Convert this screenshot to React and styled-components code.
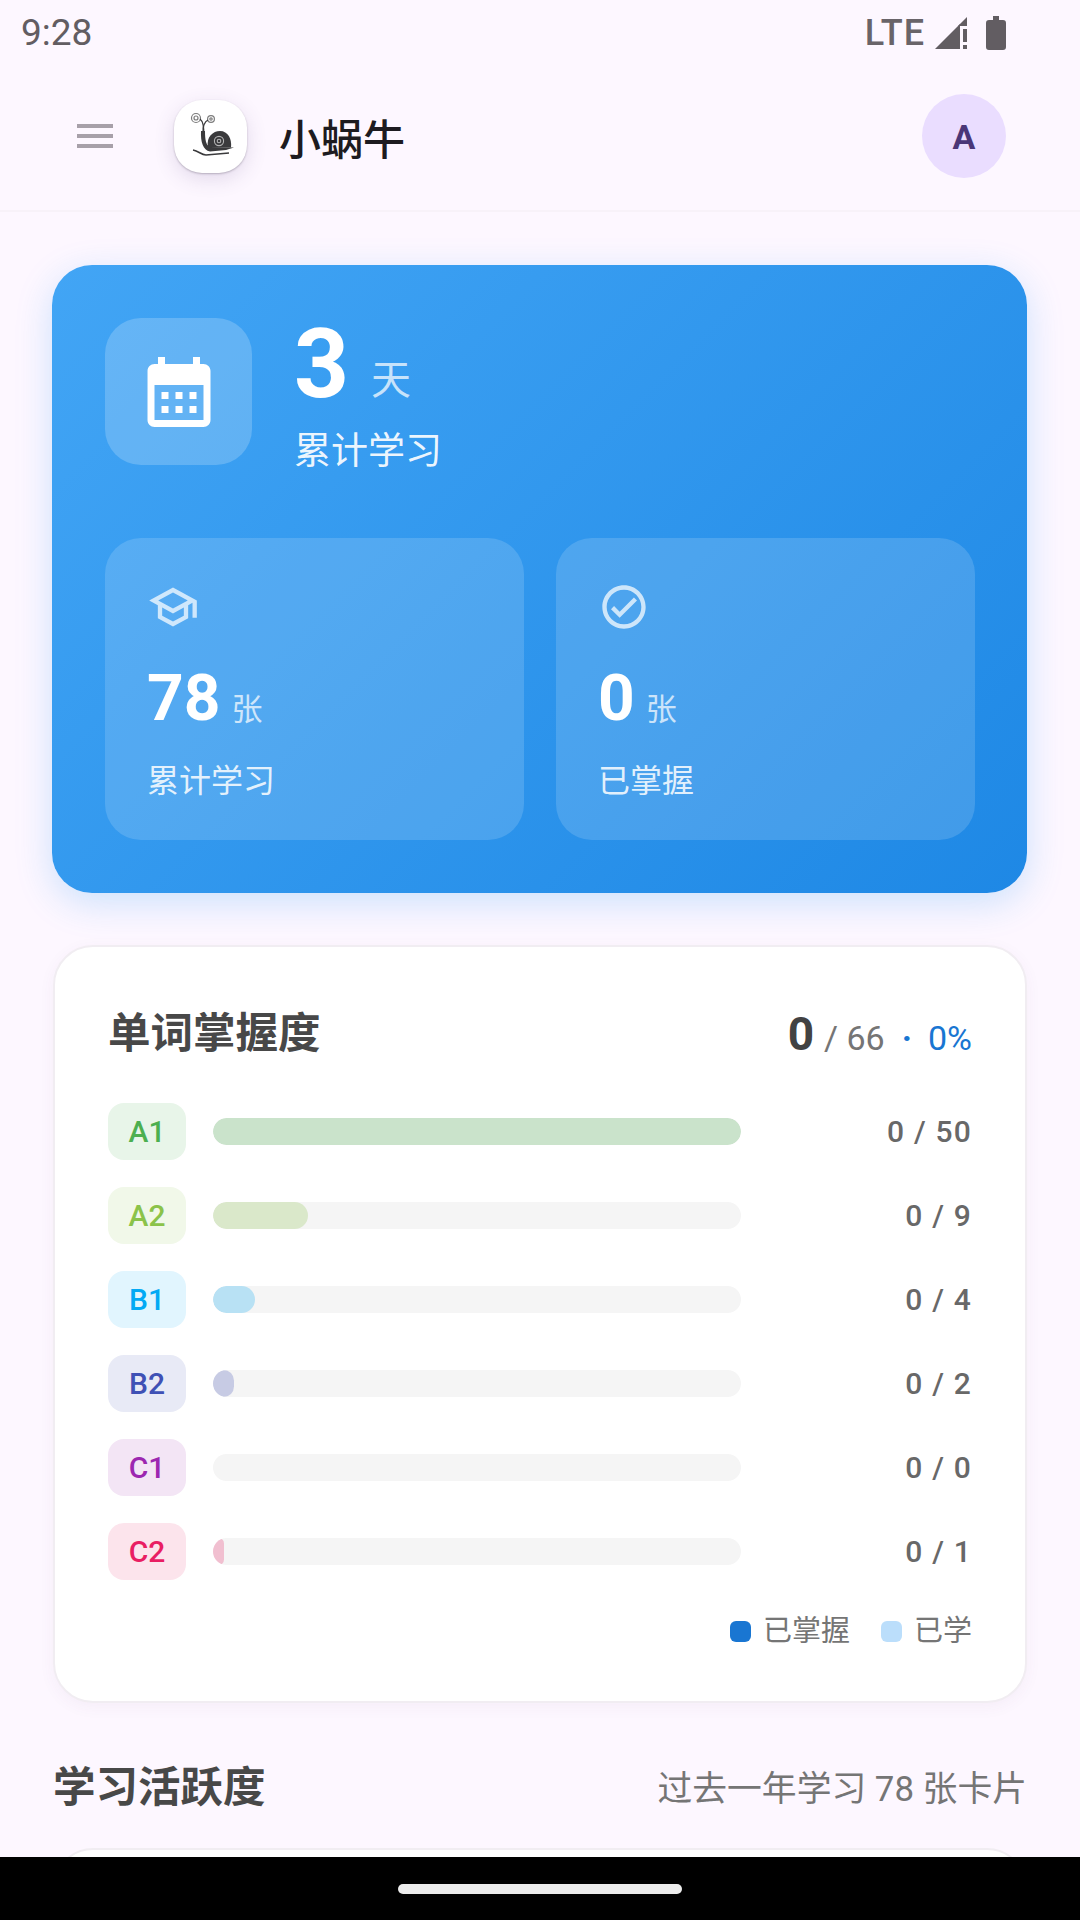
import React from "react";
import styled, { createGlobalStyle } from "styled-components";

const Global = createGlobalStyle`
  html, body { margin: 0; padding: 0; background: #fdf7ff; }
  * { box-sizing: border-box; }
  body { font-family: Roboto, "Noto Sans CJK SC", sans-serif; }
`;

const Screen = styled.div`
  width: 1080px;
  height: 1920px;
  display: flex;
  flex-direction: column;
  overflow: hidden;
  background: #fdf7ff;
`;
const StatusBar = styled.div`
  height: 68px;
  flex-shrink: 0;
  padding: 0 74px 2px 21px;
  display: flex;
  align-items: center;
  justify-content: space-between;
  color: #625d62;
`;
const Time = styled.span`
  font-size: 37px;
  line-height: 40px;
`;
const StatusIcons = styled.div`
  display: flex;
  align-items: center;
`;
const Lte = styled.span`
  font-size: 36px;
  line-height: 40px;
  font-weight: 500;
  letter-spacing: 1px;
  margin-right: 10px;
  color: #696469;
`;
const Header = styled.header`
  height: 144px;
  flex-shrink: 0;
  padding: 0 74px 6px 71px;
  display: flex;
  align-items: center;
  border-bottom: 2px solid #f8f2f9;
`;
const LogoTile = styled.div`
  width: 73px;
  height: 73px;
  margin-left: 55px;
  border-radius: 28px;
  background: #fff;
  box-shadow: 0 1px 2px rgba(60, 50, 70, 0.3), 0 6px 20px rgba(90, 70, 130, 0.16);
  display: flex;
  align-items: center;
  justify-content: center;
`;
const AppTitle = styled.h1`
  margin: 10px 0 0 32px;
  flex: 1;
  font-size: 42px;
  line-height: 56px;
  font-weight: 500;
  color: #1d1b20;
`;
const Avatar = styled.div`
  width: 84px;
  height: 84px;
  border-radius: 50%;
  background: #eaddff;
  color: #4a3678;
  font-size: 34px;
  font-weight: 700;
  padding-top: 2px;
  display: flex;
  align-items: center;
  justify-content: center;
`;
const Scroll = styled.main`
  flex: 1;
  min-height: 0;
  overflow: hidden;
  padding: 53px 53px 0 52px;
`;
const Hero = styled.section`
  height: 628px;
  padding: 53px;
  border-radius: 40px;
  background: linear-gradient(135deg, #42a5f5 0%, #1e88e5 100%);
  box-shadow: 0 10px 36px rgba(33, 150, 243, 0.22);
  color: #fff;
`;
const HeroTop = styled.div`
  height: 147px;
  display: flex;
  align-items: flex-start;
  gap: 42px;
`;
const HeroIconBox = styled.div`
  width: 147px;
  height: 147px;
  border-radius: 36px;
  background: rgba(255, 255, 255, 0.2);
  display: flex;
  align-items: center;
  justify-content: center;
`;
const HeroText = styled.div`
  display: flex;
  flex-direction: column;
  margin-top: -2px;
`;
const HeroValue = styled.div`
  display: flex;
  align-items: flex-start;
  height: 96px;
`;
const HeroNumber = styled.span`
  font-size: 96px;
  line-height: 96px;
  font-weight: 700;
`;
const HeroUnit = styled.span`
  font-size: 40px;
  line-height: 50px;
  margin: 40px 0 0 22px;
  color: rgba(255, 255, 255, 0.72);
`;
const HeroLabel = styled.div`
  font-size: 37px;
  line-height: 50px;
  margin-top: 15px;
  color: rgba(255, 255, 255, 0.92);
`;
const StatGrid = styled.div`
  display: grid;
  grid-template-columns: 419px 419px;
  gap: 32px;
  margin-top: 73px;
`;
const StatCard = styled.div`
  height: 302px;
  padding: 43px 42px 0;
  border-radius: 36px;
  background: rgba(255, 255, 255, 0.15);
  display: flex;
  flex-direction: column;
`;
const StatValue = styled.div`
  display: flex;
  align-items: baseline;
  height: 76px;
  line-height: 76px;
  margin-top: 28px;
`;
const StatNumber = styled.span`
  font-size: 64px;
  font-weight: 700;
`;
const StatUnit = styled.span`
  font-size: 31px;
  margin-left: 11px;
  color: rgba(255, 255, 255, 0.72);
`;
const StatLabel = styled.div`
  font-size: 32px;
  line-height: 44px;
  margin-top: 22px;
  color: rgba(255, 255, 255, 0.85);
`;
const MasteryCard = styled.section`
  margin: 52px 0 0 1px;
  height: 758px;
  padding: 57px 54px 0 53px;
  border-radius: 40px;
  background: #fff;
  border: 2px solid #f1edf2;
  box-shadow: 0 4px 16px rgba(90, 60, 120, 0.05);
`;
const MasteryHead = styled.div`
  display: flex;
  align-items: center;
  justify-content: space-between;
  height: 60px;
  margin-bottom: 39px;
`;
const CardTitle = styled.h2`
  margin: 0;
  font-size: 42.5px;
  line-height: 60px;
  font-weight: 700;
  color: #484848;
`;
const Summary = styled.div`
  display: flex;
  align-items: baseline;
  font-size: 34px;
  margin-right: -1px;
  color: #757575;
`;
const SummaryStrong = styled.span`
  font-size: 46px;
  font-weight: 700;
  color: #424242;
  margin-right: 10px;
`;
const SummaryDot = styled.span`
  color: #1976d2;
  font-weight: 700;
  margin: 0 16px 0 17px;
`;
const SummaryPct = styled.span`
  color: #1976d2;
  font-weight: 400;
`;
const Rows = styled.div`
  display: flex;
  flex-direction: column;
  gap: 27px;
`;
const Row = styled.div`
  display: flex;
  align-items: center;
  height: 57px;
`;
const LevelPill = styled.div`
  width: 78px;
  height: 57px;
  border-radius: 16px;
  background: ${(p) => p.$bg};
  color: ${(p) => p.$fg};
  font-size: 30px;
  font-weight: 500;
  display: flex;
  align-items: center;
  justify-content: center;
`;
const Track = styled.div`
  width: 528px;
  height: 27px;
  margin-left: 27px;
  border-radius: 14px;
  background: #f5f5f5;
  overflow: hidden;
`;
const Fill = styled.div`
  height: 100%;
  border-radius: 14px;
  background: ${(p) => p.$color};
  opacity: 0.25;
`;
const Count = styled.div`
  flex: 1;
  text-align: right;
  font-size: 30px;
  font-weight: 500;
  letter-spacing: 1.2px;
  margin-right: -1px;
  color: #686868;
`;
const Legend = styled.div`
  display: flex;
  justify-content: flex-end;
  align-items: center;
  height: 40px;
  margin: 31px -1px 0 0;
`;
const LegendSwatch = styled.span`
  width: 21px;
  height: 21px;
  border-radius: 6px;
  margin: 0 12px 0 31px;
  background: ${(p) => p.$color};
`;
const LegendText = styled.span`
  font-size: 29px;
  line-height: 40px;
  color: #757575;
`;
const SectionHead = styled.div`
  margin: 55px 0 0 1px;
  height: 60px;
  display: flex;
  align-items: center;
  justify-content: space-between;
`;
const SectionNote = styled.span`
  font-size: 34.8px;
  margin-bottom: 4px;
  color: #757575;
`;
const ActivityCard = styled.section`
  margin: 30px 0 0 1px;
  height: 300px;
  border-radius: 40px;
  background: #fff;
  border: 2px solid #f1edf2;
`;
const NavBar = styled.div`
  height: 63px;
  flex-shrink: 0;
  background: #000;
  display: flex;
  align-items: center;
  justify-content: center;
`;
const HomePill = styled.div`
  width: 284px;
  height: 10px;
  border-radius: 5px;
  background: #ececec;
`;

const SignalIcon = () => (
  <svg width="32" height="32" viewBox="0 0 32 32" fill="#625d62" aria-hidden="true">
    <path d="M0 32 L25 7 V32 Z" />
    <path d="M23 9 L32 0 V9 Z" />
    <rect x="28" y="12" width="4" height="13" />
    <rect x="28" y="28" width="4" height="4" />
  </svg>
);

const BatteryIcon = () => (
  <svg width="20" height="34" viewBox="0 0 20 34" fill="#625d62" style={{ marginLeft: 19 }} aria-hidden="true">
    <path d="M7 0 H13 V4 H17 A3 3 0 0 1 20 7 V31 A3 3 0 0 1 17 34 H3 A3 3 0 0 1 0 31 V7 A3 3 0 0 1 3 4 H7 Z" />
  </svg>
);

const MenuIcon = () => (
  <svg width="48" height="48" viewBox="0 0 24 24" fill="#a7a0a9" aria-hidden="true">
    <path d="M3 18h18v-2H3v2zm0-5h18v-2H3v2zm0-7v2h18V6H3z" />
  </svg>
);

const SnailLogo = () => (
  <svg width="73" height="73" viewBox="0 0 73 73" aria-hidden="true">
    <g fill="none" stroke="#7c7c7c" strokeWidth="1.2">
      <circle cx="22" cy="18" r="4.5" />
      <circle cx="22" cy="18" r="2" />
      <circle cx="37" cy="19" r="3.4" />
      <circle cx="37" cy="19" r="1.2" />
    </g>
    <g fill="none" stroke="#3a3a3c" strokeWidth="1.3">
      <path d="M26 19 C30 22 30 30 29.5 36" />
      <path d="M34 20 C30 22 29 27 29 32" />
    </g>
    <path d="M27 31 L31 31 C31 40 32 45 36 47 L60 47.5 L52 50 L36 51.5 C29 50 26.5 42 27 31 Z" fill="#3a3a3c" />
    <path d="M34 47 C32 37 39 31 46 31 C54 31 58 39 57 47.5 Z" fill="#3a3a3c" />
    <g fill="none" stroke="#b5b5b5" strokeWidth="1.1">
      <circle cx="45" cy="41" r="4.6" />
      <circle cx="45" cy="41" r="1.8" />
    </g>
    <path d="M19 50 C25 51 27 55 32 55 L55 53" fill="none" stroke="#3a3a3c" strokeWidth="1.5" />
  </svg>
);

const CalendarIcon = () => (
  <svg width="84" height="84" viewBox="0 0 24 24" fill="#fff" aria-hidden="true">
    <path d="M19 4h-1V2h-2v2H8V2H6v2H5c-1.11 0-1.99.9-1.99 2L3 20c0 1.1.89 2 2 2h14c1.1 0 2-.9 2-2V6c0-1.1-.9-2-2-2zm0 16H5V10h14v10zM9 14H7v-2h2v2zm4 0h-2v-2h2v2zm4 0h-2v-2h2v2zm-8 4H7v-2h2v2zm4 0h-2v-2h2v2zm4 0h-2v-2h2v2z" />
  </svg>
);

const SchoolIcon = () => (
  <svg width="52" height="52" viewBox="0 0 24 24" fill="rgba(255,255,255,0.72)" aria-hidden="true">
    <path d="M12 3 1 9l4 2.18v6L12 21l7-3.82v-6l2-1.09V17h2V9L12 3zm6.82 6L12 12.72 5.18 9 12 5.28 18.82 9zM17 15.99l-5 2.73-5-2.73v-3.72L12 15l5-2.73v3.72z" />
  </svg>
);

const CheckIcon = () => (
  <svg width="52" height="52" viewBox="0 0 24 24" fill="rgba(255,255,255,0.72)" aria-hidden="true">
    <path d="M16.59 7.58 10 14.17l-2.59-2.58L6 13l4 4 8-8zM12 2C6.48 2 2 6.48 2 12s4.48 10 10 10 10-4.48 10-10S17.52 2 12 2zm0 18c-4.42 0-8-3.58-8-8s3.58-8 8-8 8 3.58 8 8-3.58 8-8 8z" />
  </svg>
);

const levels = [
  { name: "A1", fg: "#4caf50", bg: "#e8f5e9", pct: 100, count: "0 / 50" },
  { name: "A2", fg: "#8bc34a", bg: "#f1f8e9", pct: 18, count: "0 / 9" },
  { name: "B1", fg: "#03a9f4", bg: "#e1f5fe", pct: 8, count: "0 / 4" },
  { name: "B2", fg: "#3f51b5", bg: "#e8eaf6", pct: 4, count: "0 / 2" },
  { name: "C1", fg: "#9c27b0", bg: "#f3e5f5", pct: 0, count: "0 / 0" },
  { name: "C2", fg: "#e91e63", bg: "#fce4ec", pct: 2, count: "0 / 1" },
];

export default function App() {
  return (
    <Screen>
      <Global />
      <StatusBar>
        <Time>9:28</Time>
        <StatusIcons>
          <Lte>LTE</Lte>
          <SignalIcon />
          <BatteryIcon />
        </StatusIcons>
      </StatusBar>
      <Header>
        <MenuIcon />
        <LogoTile>
          <SnailLogo />
        </LogoTile>
        <AppTitle>小蜗牛</AppTitle>
        <Avatar>A</Avatar>
      </Header>
      <Scroll>
        <Hero>
          <HeroTop>
            <HeroIconBox>
              <CalendarIcon />
            </HeroIconBox>
            <HeroText>
              <HeroValue>
                <HeroNumber>3</HeroNumber>
                <HeroUnit>天</HeroUnit>
              </HeroValue>
              <HeroLabel>累计学习</HeroLabel>
            </HeroText>
          </HeroTop>
          <StatGrid>
            <StatCard>
              <SchoolIcon />
              <StatValue>
                <StatNumber>78</StatNumber>
                <StatUnit>张</StatUnit>
              </StatValue>
              <StatLabel>累计学习</StatLabel>
            </StatCard>
            <StatCard>
              <CheckIcon />
              <StatValue>
                <StatNumber>0</StatNumber>
                <StatUnit>张</StatUnit>
              </StatValue>
              <StatLabel>已掌握</StatLabel>
            </StatCard>
          </StatGrid>
        </Hero>
        <MasteryCard>
          <MasteryHead>
            <CardTitle>单词掌握度</CardTitle>
            <Summary>
              <SummaryStrong>0</SummaryStrong>
              <span>/ 66</span>
              <SummaryDot>·</SummaryDot>
              <SummaryPct>0%</SummaryPct>
            </Summary>
          </MasteryHead>
          <Rows>
            {levels.map((l) => (
              <Row key={l.name}>
                <LevelPill $bg={l.bg} $fg={l.fg}>{l.name}</LevelPill>
                <Track>
                  <Fill $color={l.fg} style={{ width: `${l.pct}%` }} />
                </Track>
                <Count>{l.count}</Count>
              </Row>
            ))}
          </Rows>
          <Legend>
            <LegendSwatch $color="#1976d2" />
            <LegendText>已掌握</LegendText>
            <LegendSwatch $color="#bbdefb" />
            <LegendText>已学</LegendText>
          </Legend>
        </MasteryCard>
        <SectionHead>
          <CardTitle>学习活跃度</CardTitle>
          <SectionNote>过去一年学习 78 张卡片</SectionNote>
        </SectionHead>
        <ActivityCard />
      </Scroll>
      <NavBar>
        <HomePill />
      </NavBar>
    </Screen>
  );
}
